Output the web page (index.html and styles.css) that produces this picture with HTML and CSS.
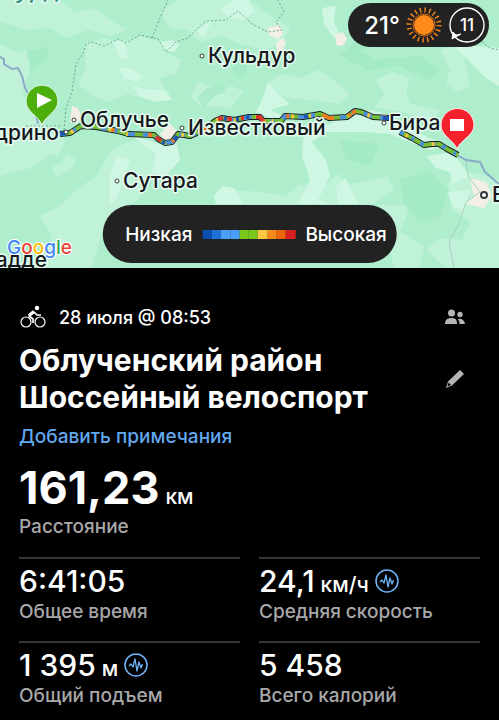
FILE: index.html
```html
<!DOCTYPE html>
<html lang="ru">
<head>
    <meta charset="UTF-8">
    <meta name="viewport" content="width=device-width, initial-scale=1.0">
    <title>Облученский район Шоссейный велоспорт</title>
    <link rel="stylesheet" href="styles.css">
</head>
<body>

<div class="map">
    <svg class="map-canvas" viewBox="0 0 499 268" preserveAspectRatio="xMidYMid slice">
        <defs>
            <path id="track-a" d="M60 134L70 133L81 126L96 127L118 131L128 134L154 135L158 139L165 143L172 142L178 134L190 136L204 130L215 121L222 118L234 120L249 117L260 117L263 121L274 121L281 121L285 116L303 117L320 114L329 118L347 117L355 111L361 112L373 117L389 118"/>
            <path id="track-b" d="M400 132L412 138L424 145L432 144L439 144L447 149L458 155"/>
        </defs>
        <rect width="499" height="268" fill="#aeeecd"/>

        <!-- lowlands -->
        <g fill="#bff2d8">
            <path d="M0 0H60L75 12L96 8L110 20L128 30L110 36L88 30L66 38L50 28L28 30L0 22Z"/>
            <path d="M84 44L104 38L124 42L142 36L160 42L168 54L182 60L176 74L160 78L166 92L150 100L128 94L108 102L92 96L78 84L86 68Z"/>
            <path d="M0 44L16 52L28 50L30 70L22 92L30 110L50 130L66 140L58 156L34 150L18 164L0 158Z"/>
            <path d="M178 0H249L268 14L290 28L282 44L262 50L240 44L222 36L200 42L188 30L170 28L160 12Z"/>
            <path d="M268 84L280 74L300 78L318 70L334 80L350 94L338 104L312 100L286 98L272 94Z"/>
            <path d="M376 80L392 72L410 78L406 92L410 104L440 110L430 122L402 112L374 108L384 94Z"/>
            <path d="M0 144L20 152L44 140L52 154L30 168L0 176Z"/>
            <path d="M96 176L112 150L132 140L158 144L168 162L150 180L138 200L110 214L100 240L92 268H44L52 236L40 216L60 206L76 190Z"/>
            <path d="M230 190L262 192L286 196L300 184L320 190L338 174L350 184L388 176L394 190L372 204L410 206L400 232L424 246L420 268H394L380 204H244Z"/>
            <path d="M448 182L470 172L499 180V268H446L426 250L440 238L462 240L470 222L452 210Z"/>
            <path d="M198 82L222 90L232 86L244 92L230 108L200 106L190 96Z"/>
            <path d="M440 50L456 46L464 56L470 86L458 92L446 84L450 70Z"/>
            <path d="M52 166L62 162L66 154L76 160L72 168L56 178Z"/>
        </g>
        <g fill="#d0f7e3">
            <path d="M119 68L132 69L142 76L138 82L124 78Z"/>
            <path d="M134 87L150 90L166 90L172 100L154 102L138 95Z"/>
            <path d="M113 42L124 40L128 58L120 60L118 52Z"/>
            <path d="M160 42L172 40L180 44L174 52L164 50Z"/>
            <path d="M220 10L234 0H249L254 12L244 20L230 18Z"/>
            <path d="M322 8L336 6L334 22L340 36L334 38L324 24Z"/>
            <path d="M206 24L212 20L204 36L196 32Z"/>
            <path d="M268 82L278 94L290 104L270 110L284 116L280 122L256 112L262 100Z"/>
            <path d="M304 130L330 124L346 114L372 110L392 116L420 134L448 146L430 150L404 140L390 134L366 132L326 132L312 142L326 160L330 176L318 200L330 204H298L310 180L302 156Z"/>
            <path d="M128 134L160 144L176 140L180 160L166 176L152 172L156 154L146 146Z"/>
            <path d="M110 176L116 156L130 160L124 176L116 200L110 206Z"/>
            <path d="M336 186L346 178L352 192L360 204H338Z"/>
            <path d="M426 156L452 152L470 176L452 184L450 172L436 168Z"/>
            <path d="M214 196L222 186L234 188L244 204H216Z"/>
            <path d="M452 44L499 48V86L486 78L470 62Z"/>
            <path d="M448 192L470 190L464 212L452 206Z"/>
        </g>
        <g fill="#9fe8c3" opacity=".6">
            <path d="M26 52L40 50L50 44L46 60L32 70Z"/>
            <path d="M206 88L222 84L226 92L214 96L204 108L198 98Z"/>
            <path d="M232 70L240 52L249 56L246 70L240 80Z"/>
            <path d="M390 8L410 20L404 40L360 50L376 60L420 56L440 70L430 80L400 66L368 70L340 56Z"/>
            <path d="M400 180L430 170L448 190L440 216L420 224L404 204Z"/>
            <path d="M340 140L380 144L370 166L346 160Z"/>
        </g>
        <g fill="#f3efe6">
            <path d="M268 28L280 25L283 34L278 39L269 35Z"/>
            <path d="M276 44L282 38L286 42L282 54L277 54Z"/>
            <path d="M335 35L342 32L347 38L344 45L337 46Z"/>
            <path d="M72 106L78 108L82 118L76 124L70 122Z"/>
            <path d="M160 134L170 124L180 134L174 144L164 140Z"/>
            <path d="M470 178L486 182L492 196L484 208L466 204L474 196Z"/>
        </g>

        <!-- district borders -->
        <g fill="none" stroke="#6fa58c" stroke-width="1" stroke-dasharray="2 2">
            <path d="M64 130L66 108L72 92L76 64L84 52L86 44L92 42L104 46L118 39L126 43L140 35L158 39L166 52L176 42L188 38L198 28L206 21L226 20L238 11L252 24L268 32L282 30L276 22L284 12L278 0"/>
            <path d="M152 38L160 18L168 0"/>
            <path d="M482 42L490 48L499 50"/>
            <path d="M26 126H62"/>
        </g>
        <!-- roads -->
        <g fill="none" stroke="#8ba9c8" stroke-width="2">
            <path d="M0 57L4 59L4 64L12 69L18 68L22 76L25 88L34 104L38 124"/>
            <path d="M457 155L466 160L480 162L485 172L499 184"/>
        </g>
        <path d="M466 161L468 176L480 192L466 202L458 226L449 242L454 268" fill="none" stroke="#a9cfc4"/>

        <!-- recorded track, coloured by speed -->
        <g fill="none" stroke-linejoin="round">
            <g stroke="#18202a" stroke-width="6">
                <use href="#track-a"/>
                <use href="#track-b"/>
            </g>
            <g stroke-width="4">
                <g stroke="#75bd32">
                    <use href="#track-a"/>
                    <use href="#track-b"/>
                </g>
                <g stroke="#4a8fdc">
                    <use href="#track-a" stroke-dasharray="6 7 4 9 9 8"/>
                    <use href="#track-b" stroke-dasharray="4 9 3 7"/>
                </g>
                <g stroke="#f2c63c">
                    <use href="#track-a" stroke-dasharray="0 11 3 15 2 9"/>
                    <use href="#track-b" stroke-dasharray="0 6 3 20"/>
                </g>
                <use href="#track-a" stroke="#ee7a1e" stroke-dasharray="0 27 4 23 3 7"/>
                <path stroke="#d9352a" d="M156 137L161 141M218 119L223 118M228 119L232 119M241 118L244 118M256 117L260 117L263 121"/>
                <path stroke="#1c56b4" d="M383 118L389 118M60 134L66 133M162 142L165 143M174 140L177 136M224 118L227 119M236 119L239 119M246 117L249 117M304 117L308 116"/>
                <path stroke="#ee7a1e" d="M323 115L329 118L334 118M352 113L356 111"/>
            </g>
        </g>

        <g fill="#fff" stroke="#333b3b" stroke-width="1">
            <circle cx="202" cy="56" r="2"/>
            <circle cx="74" cy="120" r="2"/>
            <circle cx="66" cy="132" r="2"/>
            <circle cx="182" cy="128" r="2"/>
            <circle cx="117" cy="181" r="2"/>
            <circle cx="384" cy="123" r="2"/>
            <circle cx="484" cy="195" r="3" stroke-width="2"/>
        </g>

        <g class="places">
            <text class="region" x="2" y="-2">Турдагин</text>
            <text x="208" y="63">Кульдур</text>
            <text x="80" y="127">Облучье</text>
            <text x="188" y="135">Известковый</text>
            <text x="389" y="130">Бира</text>
            <text x="123" y="188">Сутара</text>
            <text x="59" y="140" text-anchor="end">дрино</text>
            <text x="47" y="267" text-anchor="end">адде</text>
            <text x="492" y="202">Б</text>
        </g>

        <!-- start and finish pins -->
        <path d="M42 125C38 115 26 112 26 101A16 16 0 0 1 58 101C58 112 46 115 42 125Z" fill="#4caf0c" stroke="#e8f8ec" stroke-width="1"/>
        <path d="M37 93V108L52 100Z" fill="#fff"/>
        <path d="M457 149C453 139 441 136 441 125A16 16 0 0 1 474 125C474 136 461 139 457 149Z" fill="#f5222d" stroke="#fbeeee" stroke-width="1"/>
        <rect x="450" y="119" width="14" height="12" fill="#fff"/>

        <text class="google" x="7" y="254"><tspan fill="#4285f4">G</tspan><tspan fill="#ea4335">o</tspan><tspan fill="#fbbc05">o</tspan><tspan fill="#4285f4">g</tspan><tspan fill="#34a853">l</tspan><tspan fill="#ea4335">e</tspan></text>
    </svg>

    <div class="weather">
        <span>21°</span>
        <svg width="36" height="36" viewBox="0 0 36 36">
            <circle cx="18" cy="18" r="10" fill="#ff8c1a"/>
            <circle cx="18" cy="18" r="11" fill="none" stroke="#d96c10" stroke-width="1"/>
            <circle cx="18" cy="18" r="15" fill="none" stroke="#f5851c" stroke-width="5" stroke-dasharray="1.4 3.312"/>
        </svg>
        <svg class="wind" width="38" height="38" viewBox="0 0 38 38">
            <circle cx="19" cy="19" r="17" fill="none" stroke="#fff" stroke-width="1.4"/>
            <path d="M4 33L5 26L8 29L13 28Z" fill="#fff" stroke="#fff"/>
            <text x="19" y="25" text-anchor="middle">11</text>
        </svg>
    </div>

    <div class="legend">
        <span>Низкая</span>
        <div class="scale">
            <i class="s1"></i><i class="s2"></i><i class="s3"></i><i class="s3"></i><i class="s4"></i><i class="s4"></i><i class="s5"></i><i class="s6"></i><i class="s7"></i><i class="s8"></i>
        </div>
        <span>Высокая</span>
    </div>
</div>

<main class="panel">
    <div class="row date-row">
        <svg width="28" height="24" viewBox="0 0 28 24" fill="none" stroke="#fff">
            <circle cx="7" cy="17" r="5" stroke-width="1.2"/>
            <circle cx="21" cy="17" r="5" stroke-width="1.2"/>
            <circle cx="18" cy="3" r="2.2" fill="#fff" stroke="none"/>
            <path d="M14 18V14L10 11L15 7L18 10H22" stroke-width="1.6" stroke-linejoin="round"/>
            <path d="M10 10.500L15 6.500" stroke-width="3.4"/>
        </svg>
        <span class="date">28 июля @ 08:53</span>
        <button class="icon-button" aria-label="Участники">
            <svg width="22" height="18" viewBox="0 0 22 18" fill="#b4b4b6">
                <circle cx="7.500" cy="5" r="3.500"/>
                <circle cx="16" cy="6.500" r="2.700"/>
                <path d="M1 16C1 12 3 10 7.500 10S13 12 13 16Z"/>
                <path d="M13.500 10.800C18 10 20.500 12 21 16H15.500C15.500 14 15 12 13.500 10.800Z"/>
            </svg>
        </button>
    </div>

    <div class="row title-row">
        <h1>Облученский район Шоссейный велоспорт</h1>
        <button class="icon-button" aria-label="Изменить">
            <svg width="22" height="22" viewBox="0 0 22 22">
                <path d="M16 2L20 6L8 17.500L2 20L4 13.500Z" fill="#b4b4b6"/>
                <path d="M4.800 14.500L7 17L4 18.200L3.500 18Z" fill="#000"/>
            </svg>
        </button>
    </div>

    <a class="notes" href="#">Добавить примечания</a>

    <div class="distance">
        <div class="big">161,23 <small>км</small></div>
        <div class="label">Расстояние</div>
    </div>

    <div class="stats">
        <div class="stat">
            <div class="value">6:41:05</div>
            <div class="label">Общее время</div>
        </div>
        <div class="stat">
            <div class="value">24,1 <small>км/ч</small>
                <button class="chart-button" aria-label="График скорости">
                    <svg width="24" height="24" viewBox="0 0 24 24" fill="none" stroke="#6fb5fa">
                        <circle cx="12" cy="12" r="11" stroke-width="1.5"/>
                        <path d="M5 13L7 11L9 14L11 6L13 18L15 9L17 15L18 12H19" stroke-width="1.3" stroke-linejoin="round"/>
                    </svg>
                </button>
            </div>
            <div class="label">Средняя скорость</div>
        </div>
        <div class="stat">
            <div class="value">1 395 <small>м</small>
                <button class="chart-button" aria-label="График подъема">
                    <svg width="24" height="24" viewBox="0 0 24 24" fill="none" stroke="#6fb5fa">
                        <circle cx="12" cy="12" r="11" stroke-width="1.5"/>
                        <path d="M5 13L7 11L9 14L11 6L13 18L15 9L17 15L18 12H19" stroke-width="1.3" stroke-linejoin="round"/>
                    </svg>
                </button>
            </div>
            <div class="label">Общий подъем</div>
        </div>
        <div class="stat">
            <div class="value">5 458</div>
            <div class="label">Всего калорий</div>
        </div>
    </div>
</main>

</body>
</html>
```
FILE: styles.css
```css
* {
    box-sizing: border-box;
}
body {
    margin: 0;
    background: #000;
    color: #fff;
    font-family: Inter, "Liberation Sans", sans-serif;
    font-weight: 500;
}
button {
    padding: 0;
    border: 0;
    background: none;
}
svg {
    display: block;
}

/* map */
.map {
    position: relative;
    overflow: hidden;
}
.map-canvas {
    width: 100%;
    height: auto;
}
.places text {
    font-size: 21px;
    font-weight: 500;
    fill: #15191c;
    stroke: #e6faf0;
    stroke-width: 3px;
    stroke-linejoin: round;
    paint-order: stroke;
}
.places .region {
    font-size: 24px;
    font-style: italic;
    fill: #2f8f7c;
}
.google {
    font-size: 19px;
    font-weight: 500;
    stroke: #fff;
    stroke-width: 2px;
    paint-order: stroke;
}
.weather {
    position: absolute;
    top: 3px;
    right: 10px;
    display: flex;
    align-items: center;
    gap: 6px;
    height: 44px;
    padding: 0 3px 0 16px;
    border-radius: 22px;
    background: #222;
    font-size: 24px;
}
.wind text {
    font-size: 17px;
    fill: #fff;
}
.legend {
    position: absolute;
    left: 50%;
    bottom: 5px;
    transform: translateX(-50%);
    display: flex;
    align-items: center;
    gap: 10px;
    height: 58px;
    padding: 0 10px 0 23px;
    border-radius: 29px;
    background: #222;
    font-size: 19px;
}
.scale {
    display: flex;
    width: 93px;
    height: 9px;
}
.scale i {
    flex: 1;
}
.s1 { background: #0b4fb0; }
.s2 { background: #1c72d8; }
.s3 { background: #4aa0f8; }
.s4 { background: #7ac71c; }
.s5 { background: #f9c840; }
.s6 { background: #f98a1c; }
.s7 { background: #ee660c; }
.s8 { background: #d92020; }

/* details */
.panel {
    padding: 36px 19px 0;
}
.row {
    display: flex;
    align-items: center;
}
.icon-button {
    margin-left: auto;
    margin-right: 14px;
}
.date-row {
    height: 26px;
    margin-bottom: 12px;
}
.date {
    margin-left: 12px;
    font-size: 18px;
}
h1 {
    max-width: 370px;
    margin: 0;
    font-size: 30px;
    line-height: 37px;
    font-weight: 700;
}
.notes {
    display: block;
    margin-top: 8px;
    font-size: 19px;
    line-height: 26px;
    color: #60a8f0;
    text-decoration: none;
}
.distance {
    margin-top: 12px;
}
.big {
    display: flex;
    align-items: baseline;
    gap: 6px;
    height: 52px;
    font-size: 45px;
    line-height: 52px;
    font-weight: 700;
}
.label {
    font-size: 19px;
    line-height: 26px;
    color: #a8a8aa;
}
small {
    font-size: 21px;
    font-weight: 500;
}
.stats {
    display: grid;
    grid-template-columns: 1fr 1fr;
    gap: 0 19px;
    margin-top: 17px;
}
.stat {
    height: 84px;
    padding-top: 4px;
    border-top: 2px solid #363638;
}
.value {
    display: flex;
    align-items: baseline;
    gap: 6px;
    height: 36px;
    font-size: 30px;
    line-height: 36px;
}
.chart-button {
    align-self: center;
}
```
